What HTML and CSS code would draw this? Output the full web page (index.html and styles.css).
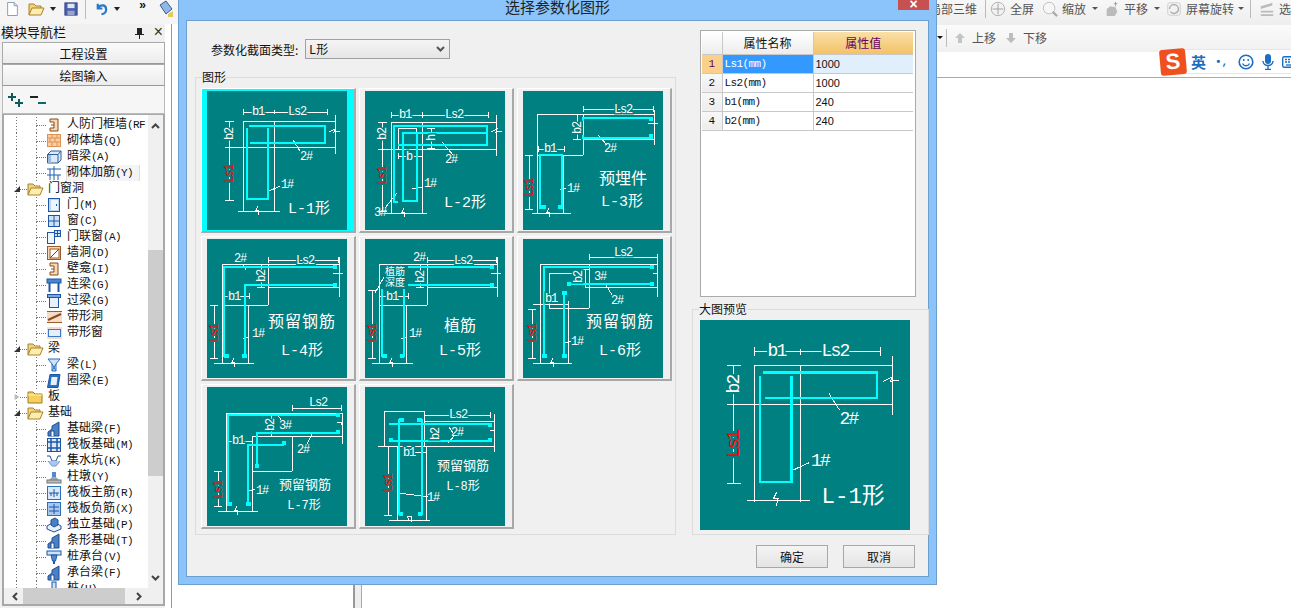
FILE: index.html
```html
<!DOCTYPE html>
<html lang="zh">
<head>
<meta charset="utf-8">
<title>选择参数化图形</title>
<link rel="stylesheet" href="styles.css">
</head>
<body>
<svg class="defs" aria-hidden="true">
  <symbol id="i-jamb" viewBox="0 0 16 16"><path d="M4 2H12V14H4V11H8V5H4Z" fill="#f5d9b8" stroke="#8a4a1c"/><path d="M5 8H8" stroke="#8a4a1c"/></symbol>
  <symbol id="i-brick" viewBox="0 0 16 16"><rect x="1.500" y="1.500" width="13" height="12" fill="#f7cfa5" stroke="#e09050"/><path d="M2 5H14M2 9H14M6 2V5M11 2V5M4 5V9M9 5V9M6 9V13M11 9V13" stroke="#e09050"/></symbol>
  <symbol id="i-hidden" viewBox="0 0 16 16"><path d="M1.500 5.500L5 2H15V11L12 14H1.500Z" fill="#dfe9f5" stroke="#2a5f9f"/><path d="M1.500 5.500H12V14M12 5.500L15 2" stroke="#2a5f9f" fill="none"/><rect x="2" y="6" width="3" height="8" fill="#9bb9dd"/></symbol>
  <symbol id="i-rebar" viewBox="0 0 16 16"><path d="M1 4H15M1 10H15M8 1V15M4 4V15M12 10V15" stroke="#1f5fb0" fill="none"/></symbol>
  <symbol id="i-door" viewBox="0 0 16 16"><rect x="2.500" y="1.500" width="11" height="13" fill="#bcd5f2" stroke="#1d56a8"/><rect x="5" y="3" width="7" height="10" fill="#eef5fd"/><rect x="10" y="7" width="1" height="2" fill="#1d56a8"/></symbol>
  <symbol id="i-win" viewBox="0 0 16 16"><rect x="2.500" y="2.500" width="11" height="11" fill="#cfe2f8" stroke="#1d56a8"/><path d="M8 3V13M3 8H13" stroke="#1d56a8"/></symbol>
  <symbol id="i-doorwin" viewBox="0 0 16 16"><rect x="1.500" y="3.500" width="7" height="11" fill="#eef5fd" stroke="#1d56a8"/><rect x="8.500" y="1.500" width="6" height="6" fill="#cfe2f8" stroke="#1d56a8"/><path d="M11.500 2V7M9 4.500H14" stroke="#1d56a8"/></symbol>
  <symbol id="i-hole" viewBox="0 0 16 16"><rect x="1.500" y="1.500" width="13" height="13" fill="#f7d9bb" stroke="#a05a24"/><rect x="4" y="4" width="9" height="9" fill="#fff" stroke="#a05a24"/><path d="M4 13L13 4" stroke="#7a3c10"/></symbol>
  <symbol id="i-tie" viewBox="0 0 16 16"><rect x="1" y="2" width="14" height="4" fill="#4a86cc" stroke="#1d56a8"/><path d="M3.500 6V15M12.500 6V15" stroke="#1d56a8" stroke-width="2"/></symbol>
  <symbol id="i-lintel" viewBox="0 0 16 16"><rect x="1.500" y="1.500" width="13" height="3" fill="#7aa8dd" stroke="#1d56a8"/><rect x="3.500" y="4.500" width="9" height="10" fill="#e8f1fb" stroke="#1d56a8"/></symbol>
  <symbol id="i-strip" viewBox="0 0 16 16"><rect x="1" y="2" width="15" height="12" fill="#f5dcc8"/><path d="M1 2.500H16M1 13.500H16" stroke="#a05a24"/><path d="M2 11L15 5" stroke="#8a4a1c" stroke-width="2"/></symbol>
  <symbol id="i-stripw" viewBox="0 0 16 16"><rect x="1" y="2" width="15" height="12" fill="#f5dcc8"/><rect x="2.500" y="4.500" width="12" height="7" fill="#e5effb" stroke="#3a78c8"/></symbol>
  <symbol id="i-beam" viewBox="0 0 16 16"><path d="M2 2H14L10 7V14H6V7Z" fill="#cfe2f8" stroke="#2a6fc0"/><path d="M6 7L10 14M10 7L6 14" stroke="#2a6fc0"/></symbol>
  <symbol id="i-ring" viewBox="0 0 16 16"><path d="M4 1.500H14L12 14.500H1.500Z" fill="#2a6fc0" stroke="#1d56a8"/><path d="M5.500 4H11.500L10.500 12H4.500Z" fill="#e8f1fb"/></symbol>
  <symbol id="i-fbeam" viewBox="0 0 16 16"><path d="M2 15V11L6 8V5L13 1V15Z" fill="#4a7fc0" stroke="#1d4f99"/><path d="M5 15V10H8V15" fill="#fff" stroke="#1d4f99"/></symbol>
  <symbol id="i-raft" viewBox="0 0 16 16"><rect x="1.500" y="1.500" width="13" height="13" fill="#dbe8f8" stroke="#1d56a8"/><path d="M1 5H15M1 11H15M5 1V15M11 1V15" stroke="#1d56a8" stroke-width="1.500"/></symbol>
  <symbol id="i-sump" viewBox="0 0 16 16"><path d="M1 3H4L6 8H10L12 3H15" stroke="#1d56a8" fill="none"/><path d="M2 8L6 13H10L14 8" fill="#a9c8ec" stroke="#6b9ad2"/></symbol>
  <symbol id="i-pier" viewBox="0 0 16 16"><rect x="6" y="3" width="4" height="5" fill="#5588c8"/><path d="M3 11L6 8H10L13 11Z" fill="#9ab"/><rect x="1" y="11" width="14" height="3" fill="#bbb" stroke="#777"/></symbol>
  <symbol id="i-main" viewBox="0 0 16 16"><rect x="1.500" y="1.500" width="13" height="13" fill="#dbe8f8" stroke="#2a6fc0"/><path d="M3 8H13M8 4V12M5 8V11M11 8V11" stroke="#1d56a8"/></symbol>
  <symbol id="i-neg" viewBox="0 0 16 16"><rect x="1.500" y="1.500" width="13" height="13" fill="#a9c8ec" stroke="#2a6fc0"/><path d="M3 6H13M3 10H13M8 3V13" stroke="#1d56a8"/></symbol>
  <symbol id="i-iso" viewBox="0 0 16 16"><path d="M1 9L8 5L15 9V12L8 15L1 12Z" fill="#e8f1fb" stroke="#1d4f99"/><path d="M5 8V3L9 1L12 3V8L8 10Z" fill="#4a7fc0" stroke="#1d4f99"/></symbol>
  <symbol id="i-cap" viewBox="0 0 16 16"><rect x="1" y="2" width="14" height="4" fill="#cfe2f8" stroke="#1d56a8"/><path d="M5 6H11L9.500 12H6.500Z" fill="#5588c8" stroke="#1d56a8"/><path d="M8 12V15" stroke="#1d56a8" stroke-width="2"/></symbol>
  <symbol id="i-pile" viewBox="0 0 16 16"><rect x="6" y="1" width="4" height="12" fill="#cfe2f8" stroke="#1d56a8"/></symbol>
  <symbol id="i-open" viewBox="0 0 17 14"><path d="M1 13V2H6L8 4H13V6" fill="#f3d27a" stroke="#a8822c"/><path d="M1 13L4 6H16L13 13Z" fill="#fdeeb0" stroke="#a8822c"/></symbol>
  <symbol id="i-closed" viewBox="0 0 17 14"><path d="M1 13V2H6L8 4H15V13Z" fill="#f6cf5c" stroke="#9a7a28"/><path d="M1 5H15" stroke="#fff2b0"/></symbol>
</svg>

<div class="app">
  <div class="leftcol">
    <div class="quick">
      <svg class="q" viewBox="0 0 16 18"><path d="M2 1H10L14 5V17H2Z" fill="#fff" stroke="#7a8ba8"/><path d="M10 1V5H14" fill="#dde" stroke="#7a8ba8"/></svg>
      <svg class="q wide" viewBox="0 0 17 14"><use href="#i-open"/></svg>
      <span class="caret"></span>
      <svg class="q save" viewBox="0 0 16 16"><rect x="1" y="1" width="14" height="14" fill="#4a5fae" stroke="#2d3d80"/><rect x="4" y="2" width="8" height="5" fill="#dfe6f4"/><rect x="4" y="10" width="8" height="5" fill="#9aa6c8"/></svg>
      <span class="qsep"></span>
      <svg class="q undo" viewBox="0 0 14 16"><path d="M3 3V8H8M3.500 7.500C6 3 12 4 12 9C12 12 10 14 7 14" fill="none" stroke="#2a78c8" stroke-width="2.400"/></svg>
      <span class="caret gap"></span>
      <span class="more">»</span>
      <svg class="q brush" viewBox="0 0 17 18"><path d="M3 5L9 1L15 9L9 14Z" fill="#8fb8e6" stroke="#33608f"/><path d="M11 14L16 11V17H11Z" fill="#e7c85c"/></svg>
    </div>
    <div class="leftbody">
      <aside class="nav">
        <div class="navhead"><span>模块导航栏</span><span class="navctl"><svg class="pin" viewBox="0 0 9 11"><path d="M2 0H7V6H9V7H5V11H4V7H0V6H2Z" fill="#222"/></svg><span class="navx">×</span></span></div>
        <div class="navbtn">工程设置</div>
        <div class="navbtn">绘图输入</div>
        <div class="expand">
          <svg class="ex" viewBox="0 0 18 14"><path d="M4 0V8M0 4H8M11 6V14M7 10H15" stroke="#0d5a5a" stroke-width="2"/></svg>
          <svg class="ex" viewBox="0 0 18 14"><path d="M0 4H8" stroke="#222" stroke-width="2"/><path d="M8 10H16" stroke="#0d6a6a" stroke-width="2"/></svg>
        </div>
        <div class="treebox">
          <div class="treemain">
            <ul class="tree">
              <li class="leaf"><i></i><svg><use href="#i-jamb"/></svg><b>人防门框墙<span class="m">(RF</span></b></li>
              <li class="leaf"><i></i><svg><use href="#i-brick"/></svg><b>砌体墙<span class="m">(Q)</span></b></li>
              <li class="leaf"><i></i><svg><use href="#i-hidden"/></svg><b>暗梁<span class="m">(A)</span></b></li>
              <li class="leaf sel"><i></i><svg><use href="#i-rebar"/></svg><b>砌体加筋<span class="m">(Y)</span></b></li>
              <li class="group"><em class="tri on"></em><i></i><svg><use href="#i-open"/></svg><b>门窗洞</b></li>
              <li class="leaf"><i></i><svg><use href="#i-door"/></svg><b>门<span class="m">(M)</span></b></li>
              <li class="leaf"><i></i><svg><use href="#i-win"/></svg><b>窗<span class="m">(C)</span></b></li>
              <li class="leaf"><i></i><svg><use href="#i-doorwin"/></svg><b>门联窗<span class="m">(A)</span></b></li>
              <li class="leaf"><i></i><svg><use href="#i-hole"/></svg><b>墙洞<span class="m">(D)</span></b></li>
              <li class="leaf"><i></i><svg><use href="#i-jamb"/></svg><b>壁龛<span class="m">(I)</span></b></li>
              <li class="leaf"><i></i><svg><use href="#i-tie"/></svg><b>连梁<span class="m">(G)</span></b></li>
              <li class="leaf"><i></i><svg><use href="#i-lintel"/></svg><b>过梁<span class="m">(G)</span></b></li>
              <li class="leaf"><i></i><svg><use href="#i-strip"/></svg><b>带形洞</b></li>
              <li class="leaf"><i></i><svg><use href="#i-stripw"/></svg><b>带形窗</b></li>
              <li class="group"><em class="tri on"></em><i></i><svg><use href="#i-open"/></svg><b>梁</b></li>
              <li class="leaf"><i></i><svg><use href="#i-beam"/></svg><b>梁<span class="m">(L)</span></b></li>
              <li class="leaf"><i></i><svg><use href="#i-ring"/></svg><b>圈梁<span class="m">(E)</span></b></li>
              <li class="group"><em class="tri off"></em><i></i><svg><use href="#i-closed"/></svg><b>板</b></li>
              <li class="group"><em class="tri on"></em><i></i><svg><use href="#i-open"/></svg><b>基础</b></li>
              <li class="leaf"><i></i><svg><use href="#i-fbeam"/></svg><b>基础梁<span class="m">(F)</span></b></li>
              <li class="leaf"><i></i><svg><use href="#i-raft"/></svg><b>筏板基础<span class="m">(M)</span></b></li>
              <li class="leaf"><i></i><svg><use href="#i-sump"/></svg><b>集水坑<span class="m">(K)</span></b></li>
              <li class="leaf"><i></i><svg><use href="#i-pier"/></svg><b>柱墩<span class="m">(Y)</span></b></li>
              <li class="leaf"><i></i><svg><use href="#i-main"/></svg><b>筏板主筋<span class="m">(R)</span></b></li>
              <li class="leaf"><i></i><svg><use href="#i-neg"/></svg><b>筏板负筋<span class="m">(X)</span></b></li>
              <li class="leaf"><i></i><svg><use href="#i-iso"/></svg><b>独立基础<span class="m">(P)</span></b></li>
              <li class="leaf"><i></i><svg><use href="#i-fbeam"/></svg><b>条形基础<span class="m">(T)</span></b></li>
              <li class="leaf"><i></i><svg><use href="#i-cap"/></svg><b>桩承台<span class="m">(V)</span></b></li>
              <li class="leaf"><i></i><svg><use href="#i-fbeam"/></svg><b>承台梁<span class="m">(F)</span></b></li>
              <li class="leaf"><i></i><svg><use href="#i-pile"/></svg><b>桩<span class="m">(U)</span></b></li>
            </ul>
            <div class="vbar">
              <svg class="arrow" viewBox="0 0 9 6"><path d="M1 5L4.500 1.500L8 5" fill="none" stroke="#444" stroke-width="2"/></svg>
              <div class="vtrack"><div class="vthumb"></div></div>
              <svg class="arrow" viewBox="0 0 9 6"><path d="M1 1L4.500 4.500L8 1" fill="none" stroke="#444" stroke-width="2"/></svg>
            </div>
          </div>
          <div class="hbar">
            <svg class="harrow" viewBox="0 0 6 9"><path d="M5 1L1.500 4.500L5 8" fill="none" stroke="#444" stroke-width="2"/></svg>
            <div class="hthumb"></div>
            <svg class="harrow" viewBox="0 0 6 9"><path d="M1 1L4.500 4.500L1 8" fill="none" stroke="#444" stroke-width="2"/></svg>
          </div>
        </div>
      </aside>
      <div class="gutter"></div>
    </div>
  </div>

  <main class="work">
    <div class="tb tb1">
      <span class="tbt clipped">局部三维</span><span class="tbsep"></span>
      <svg class="tic" viewBox="0 0 18 18"><circle cx="9" cy="9" r="7.500" fill="#f2f2f2" stroke="#aaa"/><path d="M9 3V15M3 9H15" stroke="#999"/></svg><span class="tbt">全屏</span>
      <svg class="tic" viewBox="0 0 18 18"><circle cx="8" cy="8" r="6.500" fill="#f7f7f7" stroke="#bbb"/><path d="M12 12L17 17" stroke="#aaa" stroke-width="2.500"/></svg><span class="tbt">缩放</span><span class="dcaret"></span>
      <svg class="tic" viewBox="0 0 18 18"><path d="M3 17V9L7 6L13 7L15 12L12 17Z" fill="#bbb"/><path d="M13 1V6M11 3H15" stroke="#999"/></svg><span class="tbt">平移</span><span class="dcaret"></span>
      <svg class="tic" viewBox="0 0 18 18"><rect x="2" y="2" width="14" height="14" rx="2" fill="#f2f2f2" stroke="#ccc"/><path d="M4 9A5 5 0 0 1 14 9M14 9A5 5 0 0 1 5 12" fill="none" stroke="#aaa" stroke-width="1.500"/></svg><span class="tbt">屏幕旋转</span><span class="dcaret tight"></span><span class="tbsep end"></span>
      <svg class="tic" viewBox="0 0 18 18"><path d="M2 6L15 2V5L2 9ZM2 11H16V13H2ZM2 15H16V17H2Z" fill="#bbb"/></svg><span class="tbt">选择</span>
    </div>
    <div class="tb tb2">
      <span class="dcaret dark"></span><span class="tbsep"></span>
      <svg class="tic small" viewBox="0 0 10 10"><path d="M5 0L10 5H7V10H3V5H0Z" fill="#c4c4c4"/></svg><span class="tbt">上移</span>
      <svg class="tic small" viewBox="0 0 10 10"><path d="M3 0H7V5H10L5 10L0 5H3Z" fill="#bdbdbd"/></svg><span class="tbt">下移</span>
    </div>
    <div class="tb3"></div>
    <div class="canvas">
      <div class="sidefill"></div>
      <div class="split"></div>
    </div>
  </main>
</div>

<div class="ime">
  <span class="imelogo">S</span>
  <div class="imebar">
    <span class="imeen">英</span>
    <span class="imedot">•,</span>
    <svg class="imei first" viewBox="0 0 16 16"><circle cx="8" cy="8" r="6.800" fill="none" stroke="#1c6fc0" stroke-width="1.600"/><path d="M5.800 5V7M10.200 5V7" stroke="#1c6fc0" stroke-width="1.400"/><path d="M4.500 9.500C6 12.500 10 12.500 11.500 9.500" fill="none" stroke="#1c6fc0" stroke-width="1.300"/></svg>
    <svg class="imei" viewBox="0 0 16 16"><rect x="5" y="0" width="6" height="10" rx="3" fill="#1c6fc0"/><path d="M3 7C3 13 13 13 13 7M8 12V15M5 15.500H11" fill="none" stroke="#1c6fc0" stroke-width="1.400"/></svg>
    <svg class="imei" viewBox="0 0 16 16"><rect x="0.700" y="2.700" width="14.600" height="10.600" rx="1.500" fill="#fff" stroke="#1c6fc0" stroke-width="1.400"/><path d="M3 5.500H13M3 8H13" stroke="#1c6fc0" stroke-width="1.300" stroke-dasharray="2 1"/><path d="M4 11H12" stroke="#1c6fc0" stroke-width="1.300"/></svg>
  </div>
</div>

<section class="dialog">
  <header class="dtitle">选择参数化图形<span class="dclose">×</span></header>
  <div class="client">
    <div class="dmain">
      <div class="dleft">
        <div class="typerow">
          <label class="typelabel">参数化截面类型:</label>
          <div class="select"><span>L形</span><svg class="chev" viewBox="0 0 9 6"><path d="M1 1L4.500 4.500L8 1" fill="none" stroke="#555" stroke-width="2"/></svg></div>
        </div>
        <fieldset class="fs shapes">
          <legend>图形</legend>
          <div class="thumbs">
            <div class="cell on"><svg class="th" viewBox="0 0 140 139">
              <path class="w" d="M36 30H128M23 56H128M36 30V121M67 30V121M128 24V63M31 120H73M36 21H120M36 18V24M120 18V24M67 19V23M22 30V109M18 30H27M18 56H27M18 109H27M51 115l-2 4l3 0l-1 5M122 41l6-3l-1 3l6-1M86 49l7 11M60 101l13-6"/>
              <path class="c" d="M42 35H118V52H43M40 37V108H61V37"/>
              <text class="t g" x="51" y="24">b1</text><text class="t g" x="90" y="24">Ls2</text>
              <text class="t g" transform="translate(26 43) rotate(-90)">b2</text>
              <text class="t r g" transform="translate(26 83) rotate(-90)">Ls1</text>
              <text class="t" x="99" y="69">2#</text><text class="t" x="80" y="97">1#</text>
              <text class="big" x="102" y="122">L-1形</text>
            </svg></div>

            <div class="cell"><svg class="th" viewBox="0 0 140 139">
              <path class="w" d="M26 31H131M15 58H131M26 31V122M57 31V122M131 24V65M20 122H62M26 24H123M26 21V27M57 21V27M123 21V27M17 31V120M13 31H22M13 58H22M13 120H22M33 37H51V58M33 37V58M66 37V57M62 37H70M62 57H70M33 65H57M33 62V68M77 51l11 13M47 98l10-2M20 117l12-15M39 117l-2 4l3 0l-1 5M126 41l6-3l-1 3l6-1"/>
              <path class="c" d="M33 111H29V35H122V42H38M122 42V54H33M38 41V110H52V41"/>
              <text class="t g" x="40" y="27">b1</text><text class="t g" x="89" y="27">Ls2</text>
              <text class="t g" transform="translate(21 43) rotate(-90)">b2</text>
              <text class="t r g" transform="translate(21 85) rotate(-90)">Ls1</text>
              <text class="t g" transform="translate(70 47) rotate(-90)">h</text>
              <text class="t g" x="44" y="69">b</text>
              <text class="t" x="86" y="72">2#</text><text class="t" x="65" y="96">1#</text><text class="t" x="15" y="125">3#</text>
              <text class="big" x="100" y="116">L-2形</text>
            </svg></div>

            <div class="cell"><svg class="th" viewBox="0 0 140 139">
              <path class="w" d="M14 23H131M14 23V122M60 23V64M14 64H60M40 64V122M60 48H131M131 19V54M9 122H48M60 18H130M60 15V21M130 15V21M54 23V48M50 23H58M50 48H58M15 58H41M15 55V61M41 55V61M6 64V118M2 64H10M2 118H10M26 117l-2 4l3 0l-1 5M125 33l6-1l4 1M75 44l9 10M37 99l6-2"/>
              <path class="c" d="M60 30V27H130M60 44V47H130M17 118V64H39V118"/>
              <path class="b" d="M18 114H23V118H18ZM35 114H39V118H35ZM126 26H130V30H126ZM126 43H130V47H126Z"/>
              <text class="t g" x="100" y="22">Ls2</text><text class="t g" x="27" y="61">b1</text>
              <text class="t g" transform="translate(58 37) rotate(-90)">b2</text>
              <text class="t r g" transform="translate(10 97) rotate(-90)">Ls1</text>
              <text class="t" x="87" y="61">2#</text><text class="t" x="50" y="101">1#</text>
              <text class="cn" x="100" y="93">预埋件</text>
              <text class="big" x="99" y="115">L-3形</text>
            </svg></div>

            <div class="cell"><svg class="th" viewBox="0 0 140 139">
              <path class="w" d="M15 25H132M15 25V124M61 25V66M15 66H61M41 66V124M61 48H132M132 18V58M7 124H47M61 21H131M61 18V24M131 18V24M54 25V48M50 48H58M15 57H42M42 54V60M7 66V119M3 66H11M3 119H11M27 119l-2 4l3 0l-1 5M126 35l6-1l4 1M36 26l3 5M36 100l6-2"/>
              <path class="c" d="M17 118V28H130M38 118V46H130"/>
              <path class="b" d="M17 115H22V119H17ZM35 115H40V119H35ZM126 26H130V30H126ZM126 44H130V48H126Z"/>
              <text class="t" x="33" y="23">2#</text><text class="t g" x="98" y="25">Ls2</text><text class="t g" x="27" y="61">b1</text>
              <text class="t g" transform="translate(58 37) rotate(-90)">b2</text>
              <text class="t r g" transform="translate(11 94) rotate(-90)">Ls1</text>
              <text class="t" x="51" y="98">1#</text>
              <text class="cn wide" x="95" y="88">预留钢筋</text>
              <text class="big" x="95" y="116">L-4形</text>
            </svg></div>

            <div class="cell"><svg class="th" viewBox="0 0 140 139">
              <path class="w" d="M14 25H132M14 25V124M62 25V66M14 66H62M41 66V124M62 48H132M132 18V58M7 124H48M62 21H131M62 18V24M131 18V24M55 25V48M51 48H59M14 57H43M43 54V60M7 51V119M3 51H11M3 119H11M27 119l-2 4l3 0l-1 5M126 35l6-1l4 1M19 38L10 54M36 100l6-2"/>
              <path class="c" d="M43 28H129M43 46H129M17 50V118M39 50V118"/>
              <path class="b" d="M17 115H22V119H17ZM35 115H39V119H35ZM125 26H129V30H125ZM125 44H129V48H125Z"/>
              <text class="t" x="54" y="22">2#</text><text class="t g" x="98" y="25">Ls2</text><text class="t g" x="27" y="61">b1</text>
              <text class="tiny" x="30" y="36">植筋</text><text class="tiny" x="30" y="47">深度</text>
              <text class="t g" transform="translate(59 38) rotate(-90)">b2</text>
              <text class="t r g" transform="translate(11 94) rotate(-90)">Ls1</text>
              <text class="t" x="50" y="98">1#</text>
              <text class="cn" x="95" y="92">植筋</text>
              <text class="big" x="95" y="116">L-5形</text>
            </svg></div>

            <div class="cell"><svg class="th" viewBox="0 0 140 139">
              <path class="w" d="M17 25H134M17 25V124M45 62V124M10 65H45M66 25V69M26 69H66M26 34V69M26 34H59M62 48H134M134 18V58M10 124H49M66 18H134M66 15V21M134 15V21M62 30V48M58 30H66M9 70V119M5 70H13M5 119H13M30 119l-2 4l3 0l-1 5M130 35l4-1l1 3M83 46l6 10M42 104l6-2"/>
              <path class="c" d="M21 118V28H131M45 45H131M41 53V118"/>
              <path class="b" d="M19 115H24V119H19ZM39 115H44V119H39ZM39 52H44V56H39ZM127 26H131V30H127ZM127 43H131V47H127ZM44 43H48V47H44Z"/>
              <text class="t g" x="100" y="17">Ls2</text><text class="t g" x="28" y="63">b1</text>
              <text class="t" x="77" y="41">3#</text><text class="t" x="94" y="65">2#</text><text class="t" x="54" y="106">1#</text>
              <text class="t g" transform="translate(59 38) rotate(-90)">b2</text>
              <text class="t r g" transform="translate(13 94) rotate(-90)">Ls1</text>
              <text class="cn wide" x="97" y="88">预留钢筋</text>
              <text class="big" x="97" y="116">L-6形</text>
            </svg></div>

            <div class="cell"><svg class="th" viewBox="0 0 140 139">
              <path class="w" d="M19 26H135M19 26V124M45 49V124M45 49H135M85 49V84M45 84H85M135 26V57M11 124H51M85 21H134M85 18V24M134 18V24M64 26V49M19 54H45M11 84V119M7 84H15M7 119H15M30 119l-2 4l3 0l-1 5M130 36l4-1l1 3M105 47l-5 10M42 104l6-2M71 28l3 5"/>
              <path class="c" d="M21 118V28H133M50 80V46H133M41 118V58H77"/>
              <path class="b" d="M20 115H25V119H20ZM39 115H44V119H39ZM48 77H52V81H48ZM75 54H79V58H75ZM129 26H133V30H129ZM129 43H133V47H129Z"/>
              <text class="t g" x="111" y="19">Ls2</text><text class="t g" x="31" y="57">b1</text>
              <text class="t" x="78" y="42">3#</text><text class="t" x="96" y="66">2#</text><text class="t" x="55" y="107">1#</text>
              <text class="t g" transform="translate(67 38) rotate(-90)">b2</text>
              <text class="t r g" transform="translate(15 103) rotate(-90)">Ls1</text>
              <text class="cns" x="98" y="102">预留钢筋</text>
              <text class="big small" x="97" y="122">L-7形</text>
            </svg></div>

            <div class="cell"><svg class="th" viewBox="0 0 140 139">
              <path class="w" d="M19 24H59V59H19ZM13 59H129M59 34H129M129 27V65M32 59V133M61 59V133M24 133H65M59 28H125M59 25V31M125 25V31M40 65H61M23 59V128M19 128H27M44 133l-2 -4l5 0l-1 6M125 44l4-1l1 3M84 40l4 6M90 48l-7 8M34 106l29 4"/>
              <path class="c" d="M24 37H127M24 54H127M34 32V128M57 32V128"/>
              <path class="b" d="M34 31H39V35H34ZM52 31H57V35H52ZM123 36H127V40H123ZM123 51H127V55H123ZM24 51H28V55H24ZM34 125H38V129H34ZM53 125H57V129H53Z"/>
              <text class="t g" x="93" y="31">Ls2</text><text class="t g" x="44" y="69">b1</text>
              <text class="t" x="92" y="49">2#</text><text class="t" x="68" y="114">1#</text>
              <text class="t g" transform="translate(74 47) rotate(-90)">b2</text>
              <text class="t r g" transform="translate(27 96) rotate(-90)">Ls1</text>
              <text class="cns" x="98" y="83">预留钢筋</text>
              <text class="big small" x="98" y="103">L-8形</text>
            </svg></div>
          </div>
        </fieldset>
      </div>
      <div class="dright">
        <div class="gridbox">
          <table class="props">
            <colgroup><col class="c0"><col class="c1"><col class="c2"></colgroup>
            <thead><tr><th></th><th>属性名称</th><th class="act">属性值</th></tr></thead>
            <tbody>
              <tr class="cur"><td class="no">1</td><td class="nm">Ls1(mm)</td><td class="val">1000</td></tr>
              <tr><td class="no">2</td><td class="nm">Ls2(mm)</td><td class="val">1000</td></tr>
              <tr><td class="no">3</td><td class="nm">b1(mm)</td><td class="val">240</td></tr>
              <tr><td class="no">4</td><td class="nm">b2(mm)</td><td class="val">240</td></tr>
            </tbody>
          </table>
        </div>
        <fieldset class="fs preview">
          <legend>大图预览</legend>
          <svg class="pv" viewBox="0 0 140 140">
            <path class="w" d="M36 30H128M23 56H128M36 30V121M67 30V121M128 24V63M31 120H73M36 21H120M36 18V24M120 18V24M67 19V23M22 30V109M18 30H27M18 56H27M18 109H27M51 115l-2 4l3 0l-1 5M122 41l6-3l-1 3l6-1M86 49l7 11M60 101l13-6"/>
            <path class="c" d="M42 35H118V52H43M40 37V108H61V37"/>
            <text class="t g" x="51" y="24">b1</text><text class="t g" x="90" y="24">Ls2</text>
            <text class="t g" transform="translate(26 43) rotate(-90)">b2</text>
            <text class="t r g" transform="translate(26 83) rotate(-90)">Ls1</text>
            <text class="t" x="99" y="69">2#</text><text class="t" x="80" y="97">1#</text>
            <text class="big" x="102" y="122">L-1形</text>
          </svg>
        </fieldset>
      </div>
    </div>
    <footer class="dfoot">
      <button class="btn">确定</button>
      <button class="btn">取消</button>
    </footer>
  </div>
</section>
</body>
</html>
```

FILE: styles.css
```css
* { box-sizing: border-box; }
html, body { margin: 0; height: 100%; }
body {
  width: 1291px; height: 608px; overflow: hidden; background: #fff; position: relative;
  font: 12px "Liberation Mono", "Noto Sans CJK SC", monospace; color: #111;
}
.defs { position: absolute; width: 0; height: 0; }
.app { display: flex; height: 608px; }

/* left column */
.leftcol { width: 178px; flex: none; display: flex; flex-direction: column; background: #f0f0f0; }
.quick { height: 24px; flex: none; display: flex; align-items: center; padding: 0 0 7px 6px; background: #f5f5f5; }
.q { width: 13px; height: 18px; flex: none; }
.q.wide { width: 17px; height: 14px; margin-left: 9px; }
.q.save { width: 14px; height: 14px; margin-left: 8px; }
.q.undo { width: 13px; height: 15px; margin-left: 9px; }
.q.brush { width: 17px; height: 18px; margin-left: 4px; }
.caret { width: 0; height: 0; border: 3px solid transparent; border-top: 4px solid #222; border-bottom: 0; margin-left: 5px; }
.caret.gap { margin-left: 6px; }
.qsep { width: 1px; height: 20px; background: #bbb; margin-left: 7px; }
.more { width: 14px; margin-left: 19px; font-size: 12px; font-weight: bold; line-height: 10px; align-self: flex-start; padding-top: 1px; }
.leftbody { flex: 1; display: flex; min-height: 0; }
.nav { width: 165px; flex: none; display: flex; flex-direction: column; }
.navhead { height: 18px; flex: none; display: flex; justify-content: space-between; align-items: center; font-size: 13px; line-height: 17px; padding-left: 1px; }
.navctl { display: flex; align-items: center; gap: 9px; padding-right: 2px; }
.pin { width: 9px; height: 11px; }
.navx { font-size: 16px; line-height: 14px; color: #333; }
.navbtn { height: 22px; flex: none; margin-left: 2px; border: 1px solid #aaa; border-bottom-color: #999; background: linear-gradient(#fbfbfb, #ececec); text-align: center; font-family: "Noto Sans CJK SC", sans-serif; line-height: 20px; padding-top: 1px; }
.expand { height: 28px; flex: none; margin-left: 2px; border: 1px solid #bbb; border-top: 0; background: #f6f6f6; display: flex; align-items: center; gap: 4px; padding: 0 0 0 5px; }
.ex { width: 18px; height: 14px; }
.treebox { margin: 0 0 3px 2px; height: 492px; border: 2px solid #a8a8a8; border-top-width: 1px; display: flex; flex-direction: column; background: #f0f0f0; }
.treemain { flex: 1; min-height: 0; display: flex; background: #fff; }
.tree { list-style: none; margin: 0; padding: 2px 0 0; flex: 1; overflow: hidden; min-width: 0; }
.tree li {
  height: 16px; display: flex; align-items: center; white-space: nowrap; overflow: hidden;
  background-image: repeating-linear-gradient(#777 0 1px, transparent 1px 3px), repeating-linear-gradient(#777 0 1px, transparent 1px 3px);
  background-size: 1px 100%, 1px 100%; background-repeat: no-repeat;
}
.tree li.leaf { padding-left: 32px; background-position: 12px 0, 32px 0; }
.tree li.group { padding-left: 10px; background-position: 12px 0, 12px 0; }
.tree li i { width: 10px; flex: none; border-top: 1px dotted #777; }
.tree li.group i { width: 7px; }
.tree li svg { width: 16px; height: 16px; flex: none; }
.tree li b { font-weight: normal; margin-left: 5px; font-size: 12px; line-height: 16px; color: #111; }
.tree li.group svg { width: 17px; height: 14px; }
.tree li.group b { margin-left: 4px; }
.tree li.sel b { background: #f4f4f4; outline: 1px solid #ddd; padding-right: 6px; }
.m { font-size: 11px; letter-spacing: -0.6px; }
.tri { width: 6px; height: 6px; flex: none; display: block; }
.tri.on { background: #333; clip-path: polygon(100% 0, 100% 100%, 0 100%); }
.tri.off { background: #bbb; clip-path: polygon(10% 0, 90% 50%, 10% 100%); }
.vbar { width: 15px; flex: none; background: #f0f0f0; display: flex; flex-direction: column; align-items: center; padding: 8px 0 7px; }
.arrow { width: 9px; height: 6px; flex: none; }
.vtrack { flex: 1; width: 100%; padding-top: 121px; }
.vthumb { width: 15px; height: 226px; background: #cdcdcd; }
.hbar { height: 16px; flex: none; display: flex; align-items: center; padding: 0 14px 0 8px; background: #f0f0f0; }
.harrow { width: 6px; height: 9px; flex: none; }
.hthumb { width: 102px; height: 16px; background: #cdcdcd; margin: 0 11px 0 5px; }
.gutter { width: 13px; background: linear-gradient(90deg, #fff 0 6px, #999 6px 7px, #fff 7px); }

/* work area behind dialog */
.work { flex: 1; min-width: 0; display: flex; flex-direction: column; }
.tb { display: flex; align-items: center; padding-left: 759px; color: #555; font-size: 12px; white-space: nowrap; overflow: hidden; font-family: "Noto Sans CJK SC", sans-serif; }
.tb1 { height: 25px; padding-bottom: 8px; background: linear-gradient(#f7f7f7, #eeeeee); }
.tb2 { height: 27px; padding-bottom: 2px; background: linear-gradient(#fbfbfb, #f0f0f0); }
.tb3 { height: 25px; background: #fff; }
.canvas { flex: 1; display: flex; border-top: 1px solid #aaa; background: #fff; }
.sidefill { width: 175px; flex: none; }
.split { width: 9px; flex: none; background: #eee; border-left: 2px solid #999; border-right: 1px solid #aaa; }
.tbt { flex: none; }
.clipped { width: 40px; text-align: right; overflow: hidden; direction: rtl; }
.tbsep { width: 1px; height: 18px; background: #bbb; margin: 0 4px 0 8px; flex: none; }
.tbsep.end { margin: 0 8px 0 6px; }
.tic { width: 16px; height: 16px; margin-right: 4px; flex: none; }
.tb .tbt + .tic { margin-left: 8px; }
.dcaret { width: 0; height: 0; border: 3px solid transparent; border-top: 3px solid #555; border-bottom: 0; margin: 0 6px; flex: none; }
.dcaret.tight { margin: 0 0 0 4px; }
.dcaret.dark { border-top-color: #111; margin: 0; }
.tb2 .tbsep { margin: 0 8px 0 3px; }
.tb2 .tic.small { width: 10px; height: 10px; margin: 0 7px 0 0; }
.tb2 .tbt + .tic.small { margin-left: 10px; }

/* IME */
.ime { position: absolute; left: 1160px; top: 48px; width: 131px; height: 27px; display: flex; align-items: center; }
.imelogo { width: 26px; height: 26px; background: #f0501e; color: #fff; font: bold 22px/25px "Liberation Sans", sans-serif; text-align: center; border-radius: 3px; transform: rotate(-5deg); flex: none; position: relative; z-index: 1; }
.imebar { flex: 1; height: 25px; background: #fff; border: 1px solid #dce8f5; border-right: 0; margin-left: -2px; padding-left: 6px; display: flex; align-items: center; gap: 6px; overflow: hidden; white-space: nowrap; }
.imeen { color: #1c6fc0; font-size: 15px; font-weight: bold; flex: none; font-family: "Noto Sans CJK SC", sans-serif; }
.imedot { color: #1c6fc0; font-size: 11px; font-weight: bold; flex: none; margin: 0 2px 0 3px; }
.imei { width: 16px; height: 16px; flex: none; }
.imei.first { margin-left: 2px; }

/* dialog */
.dialog { position: absolute; left: 178px; top: 0; width: 759px; height: 585px; background: #8ac4fa; border: 1px solid #6d9fcc; border-top: 0; padding: 0 7px 7px; display: flex; flex-direction: column; }
.dtitle { height: 20px; flex: none; text-align: center; font-size: 15px; line-height: 13px; color: #222; position: relative; font-family: "Noto Sans CJK SC", sans-serif; }
.dclose { position: absolute; right: 0; top: 0; width: 31px; height: 10px; background: #c75050; color: #fff; font: bold 14px/8px "Liberation Sans", sans-serif; }
.client { flex: 1; min-height: 0; background: #f0f0f0; border: 1px solid #6d9fcc; display: flex; flex-direction: column; }
.dmain { display: flex; height: 514px; flex: none; padding-left: 8px; }
.dleft { width: 497px; flex: none; }
.typerow { display: flex; align-items: center; height: 20px; margin-top: 18px; padding-left: 16px; }
.typelabel { width: 94px; flex: none; font-family: "Noto Sans CJK SC", sans-serif; }
.select { width: 145px; height: 20px; border: 1px solid #a0a0a0; background: linear-gradient(#f4f4f4, #e6e6e6); display: flex; align-items: center; justify-content: space-between; padding: 0 4px 0 3px; }
.chev { width: 9px; height: 6px; }
.fs { margin: 0; padding: 0; border: 1px solid #dcdcdc; min-width: 0; }
.fs legend { padding: 0; margin-left: 6px; font-size: 12px; line-height: 14px; font-family: "Noto Sans CJK SC", sans-serif; }
.shapes { width: 481px; height: 465px; margin-top: 11px; padding: 4px 0 0 5px; }
.shapes legend { margin-left: 1px; }
.thumbs { display: grid; grid-template-columns: repeat(3, 155px); grid-auto-rows: 145px; gap: 3px; }
.cell { border: 1px solid; border-color: #fff #a8a8a8 #a8a8a8 #fff; border-width: 1px 2px 2px 1px; padding: 2px 0 0 5px; background: #f0f0f0; }
.cell.on { background: #00ffff; }
.th { display: block; width: 140px; height: 139px; background: #008080; shape-rendering: crispEdges; }
.pv { display: block; width: 210px; height: 210px; background: #008080; margin: 4px 0 0 7px; shape-rendering: crispEdges; }
.w { fill: none; stroke: #fff; stroke-width: 1; vector-effect: non-scaling-stroke; }
.c { fill: none; stroke: #00ffff; stroke-width: 2.500; vector-effect: non-scaling-stroke; }
.b { fill: #00ffff; }
.t { fill: #fff; font: 12px "Liberation Mono", monospace; letter-spacing: -1.2px; text-anchor: middle; }
.t.g { paint-order: stroke; stroke: #008080; stroke-width: 3px; }
.t.r { fill: #ff0000; }
.big { fill: #fff; font: 15px "Liberation Mono", "Noto Sans CJK SC", monospace; text-anchor: middle; }
.big.small { font-size: 12px; }
.cn { fill: #fff; font: 16px "Noto Sans CJK SC", sans-serif; text-anchor: middle; }
.cn.wide { letter-spacing: 1px; }
.cns { fill: #fff; font: 13px "Noto Sans CJK SC", sans-serif; text-anchor: middle; }
.tiny { fill: #fff; font: 10px "Noto Sans CJK SC", sans-serif; text-anchor: middle; paint-order: stroke; stroke: #008080; stroke-width: 2px; }

.dright { width: 237px; flex: none; }
.gridbox { width: 216px; height: 267px; margin: 9px 0 0 8px; border: 1px solid #aaa; background: #fff; padding: 1px; }
.props { border-collapse: collapse; table-layout: fixed; width: 211px; font-size: 11px; }
.c0 { width: 20px; } .c1 { width: 91px; } .c2 { width: 100px; }
.props th { height: 22px; padding: 0; border-right: 1px solid #c8c8c8; border-bottom: 1px solid #c8c8c8; background: linear-gradient(#fff, #ececec); font: 12px "Noto Sans CJK SC", sans-serif; color: #111; }
.props th.act { background: linear-gradient(#fadfa8, #f2c265); color: #660066; border-right: 0; }
.props td { height: 19px; padding: 0 0 0 2px; border-right: 1px solid #c8c8c8; border-bottom: 1px solid #c8c8c8; }
.props td.no { background: linear-gradient(#f8f8f8, #ececec); text-align: center; padding: 0; font-size: 11px; }
.props td.nm { font: 11px "Liberation Mono", monospace; letter-spacing: -0.6px; }
.props td.val { font: 11px "Liberation Sans", sans-serif; border-right: 0; }
.props .cur td.no { background: #fad08a; color: #660066; }
.props .cur td.nm { background: #3399ff; color: #fff; }
.props .cur td.val { background: #e1effc; }
.preview { width: 237px; height: 233px; margin-top: 5px; }
.dfoot { display: flex; justify-content: flex-end; gap: 15px; padding: 10px 13px 0 0; }
.btn { width: 72px; height: 23px; border: 1px solid #a8a8a8; background: linear-gradient(#f4f4f4, #e4e4e4); padding: 0; font: 12px "Noto Sans CJK SC", sans-serif; color: #111; }
```
